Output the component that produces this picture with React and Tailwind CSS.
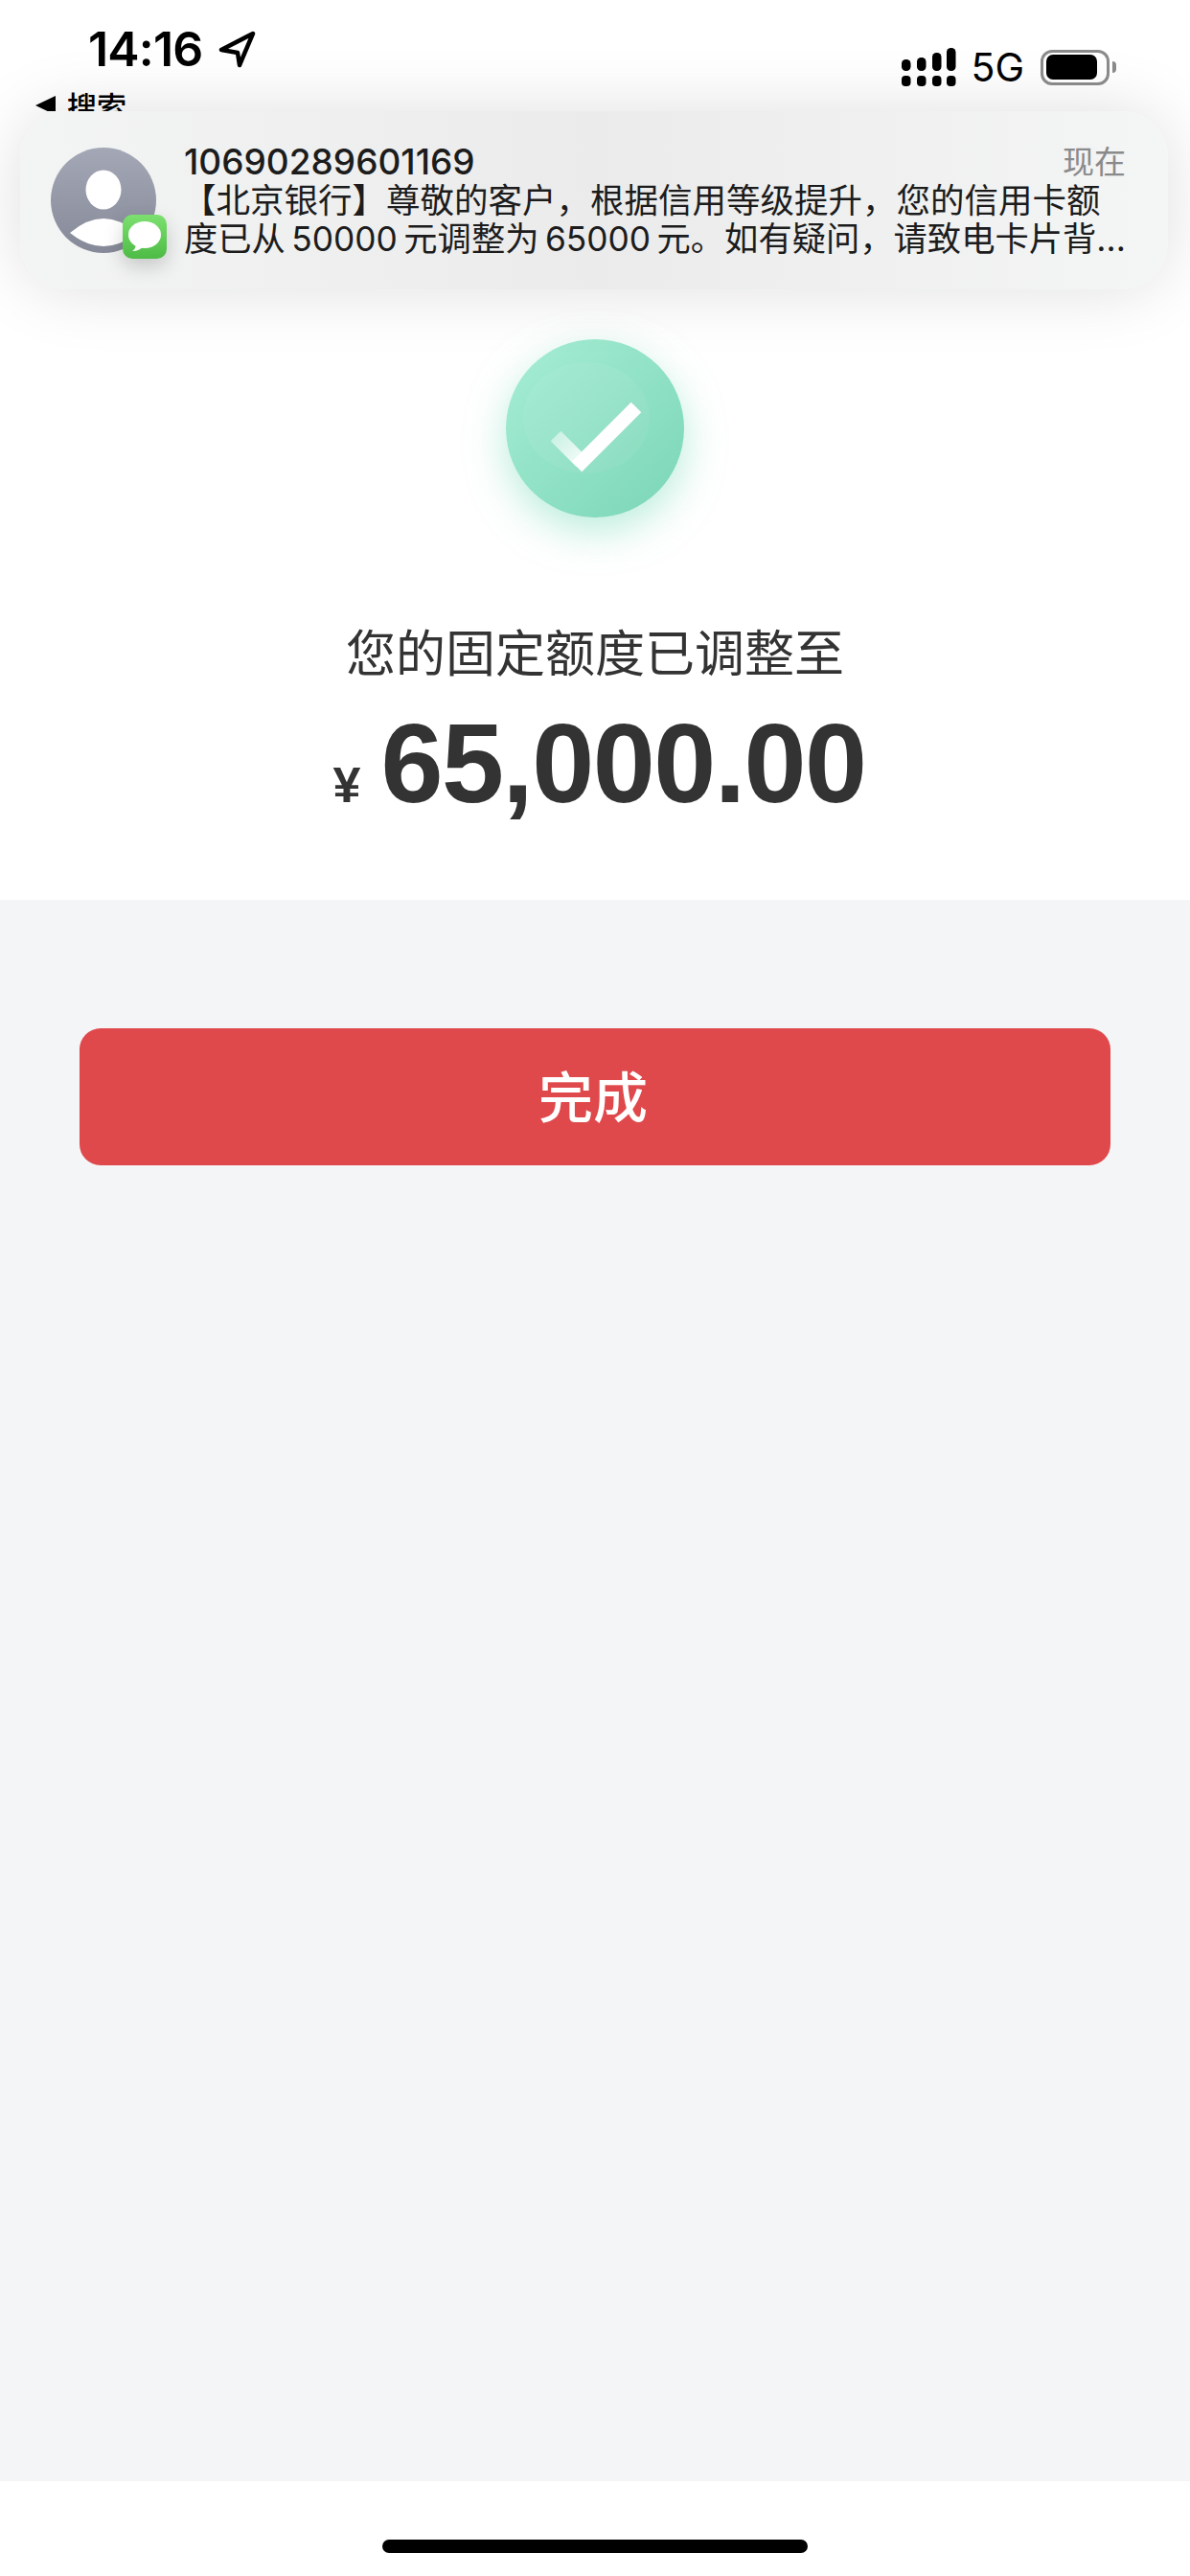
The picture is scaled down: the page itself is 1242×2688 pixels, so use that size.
import { useState } from "react";

const sansCn = "font-['Inter','Noto_Sans_CJK_SC',sans-serif]";

function SignalIcon() {
  const cols = [
    { x: 0, top: 12 },
    { x: 16, top: 10 },
    { x: 32, top: 5 },
    { x: 47, top: 0 },
  ];
  return (
    <svg width="57" height="40" viewBox="0 0 57 40" fill="#000">
      {cols.map((c) => (
        <g key={c.x}>
          <rect x={c.x} y={c.top} width="9.5" height={24 - c.top} rx="4.5" />
          <rect x={c.x} y="29" width="9.5" height="11" rx="4" />
        </g>
      ))}
    </svg>
  );
}

function StatusBar() {
  return (
    <div className="absolute inset-x-0 top-0 h-[116px] overflow-hidden">
      <div className="flex items-start justify-between pl-[92px] pr-[77px]">
        <div className="flex items-center gap-[16px] pt-[24px]">
          <span className="font-['Inter',sans-serif] text-[50px] font-semibold leading-[54px] tracking-[-0.8px] text-black">14:16</span>
          <svg width="40" height="40" viewBox="0 0 40 40" fill="none" stroke="#000" strokeWidth="4.5" strokeLinejoin="round">
            <path d="M36 4 L3 21 L20 24 L22 37 Z" />
          </svg>
        </div>
        <div className="flex items-center pt-[50px]">
          <SignalIcon />
          <span className="ml-[15px] font-['Inter',sans-serif] text-[41px] leading-[40px] text-black">5G</span>
          <div className="ml-[17px] flex items-center">
            <div className="flex h-[37px] w-[72px] items-center rounded-[12px] border-[3px] border-[#8c8c8c] pl-[3px]">
              <div className="h-[26px] w-[53px] rounded-[7px] bg-black"></div>
            </div>
            <div className="ml-[3px] h-[12px] w-[4px] rounded-r-full bg-[#8c8c8c]"></div>
          </div>
        </div>
      </div>
      <div className="absolute left-[37px] top-[90px] flex items-center gap-[12px]">
        <svg width="21" height="20" viewBox="0 0 21 20" fill="#000">
          <path d="M21 0 V20 L0 10 Z" />
        </svg>
        <span className="font-['Noto_Sans_CJK_SC',sans-serif] text-[31px] font-medium leading-[40px] text-black">搜索</span>
      </div>
    </div>
  );
}

function Avatar() {
  return (
    <div className="relative h-[116px] w-[122px] shrink-0">
      <svg width="110" height="110" viewBox="0 0 110 110">
        <defs>
          <linearGradient id="avatarBg" x1="0" y1="0" x2="0" y2="1">
            <stop offset="0" stopColor="#a4a8b6" />
            <stop offset="1" stopColor="#868a98" />
          </linearGradient>
        </defs>
        <circle cx="55" cy="55" r="55" fill="url(#avatarBg)" />
        <ellipse cx="55" cy="44" rx="18.5" ry="20.5" fill="#fff" />
        <path d="M20 89 Q55 59 90 89 Q55 117 20 89 Z" fill="#fff" />
      </svg>
      <div className="absolute left-[75px] top-[70px] flex h-[46px] w-[46px] items-center justify-center rounded-[10px] bg-gradient-to-b from-[#7ce06f] to-[#4dbb46] shadow-[0_8px_20px_rgba(0,0,0,0.18)]">
        <svg width="36" height="34" viewBox="0 0 36 34" fill="#fff">
          <ellipse cx="18" cy="15" rx="17" ry="14" />
          <path d="M9 24 C9 28 7 31 5 32 C10 32 14 30 17 27 Z" />
        </svg>
      </div>
    </div>
  );
}

function Banner() {
  return (
    <div className="absolute left-[21px] top-[116px] flex h-[186px] w-[1198px] items-start rounded-[50px] bg-gradient-to-r from-[#f3f4f4] via-[#ebebeb] to-[#f4f5f5] pl-[32px] pr-[44px] pt-[38px] shadow-[0_0_70px_rgba(0,0,0,0.13)]">
      <Avatar />
      <div className={`ml-[17px] min-w-0 flex-1 ${sansCn} text-[#1c1c1c]`}>
        <div className="-mt-[4px] flex items-center justify-between">
          <span className="text-[37px] font-medium leading-[38px]">10690289601169</span>
          <span className="text-[33px] leading-[38px] text-[#8a8a8a]">现在</span>
        </div>
        <div className="-ml-[2px] mt-[2px] whitespace-nowrap text-[35.5px] leading-[40px]">【北京银行】尊敬的客户，根据信用等级提升，您的信用卡额</div>
        <div className="whitespace-nowrap text-[35.3px] leading-[40px]">度已从{"\u2009"}50000{"\u2009"}元调整为{"\u2009"}65000{"\u2009"}元。如有疑问，请致电卡片背...</div>
      </div>
    </div>
  );
}

function SuccessMark() {
  return (
    <div className="relative h-[186px] w-[186px] rounded-full bg-gradient-to-br from-[#a6eed5] to-[#7ad5b6] shadow-[0_14px_40px_rgba(120,220,185,0.5)]">
      <svg width="186" height="186" viewBox="0 0 186 186" fill="none">
        <defs>
          <linearGradient id="shortArm" x1="0" y1="0" x2="1" y2="1">
            <stop offset="0" stopColor="#fff" stopOpacity="0.5" />
            <stop offset="1" stopColor="#fff" stopOpacity="0.9" />
          </linearGradient>
        </defs>
        <ellipse cx="84" cy="82" rx="66" ry="58" fill="#fff" fillOpacity="0.06" />
        <path d="M52 101 L79 128" stroke="url(#shortArm)" strokeWidth="15" />
        <path d="M74 133 L136 71" stroke="#fff" strokeWidth="15" />
      </svg>
    </div>
  );
}

export default function App() {
  const [done] = useState(false);

  return (
    <div className="relative flex h-[2688px] w-[1242px] flex-col overflow-hidden bg-white">
      <section className="flex h-[939px] flex-col items-center bg-white pt-[354px]">
        <SuccessMark />
        <p className="mt-[109px] font-['Noto_Sans_CJK_SC',sans-serif] text-[52px] leading-[60px] text-[#333]">您的固定额度已调整至</p>
        <div className="ml-[9px] mt-[28px] flex items-baseline gap-[21px] font-['Liberation_Sans',sans-serif] font-bold text-[#333]">
          <span className="text-[52px] leading-[120px]">¥</span>
          <span className="text-[117px] leading-[120px] tracking-[-1.6px]">65,000.00</span>
        </div>
      </section>

      <main className="flex-1 bg-[#f4f5f7] px-[83px] pt-[134px]">
        <button
          disabled={done}
          className="flex h-[143px] w-full items-center justify-center rounded-[22px] bg-[#df494b] pb-[6px] pr-[4px] font-['Noto_Sans_CJK_SC',sans-serif] text-[57px] font-medium text-white"
        >
          完成
        </button>
      </main>

      <footer className="flex h-[99px] justify-center bg-white pt-[61px]">
        <div className="h-[14px] w-[444px] rounded-full bg-black"></div>
      </footer>

      <StatusBar />
      <Banner />
    </div>
  );
}
